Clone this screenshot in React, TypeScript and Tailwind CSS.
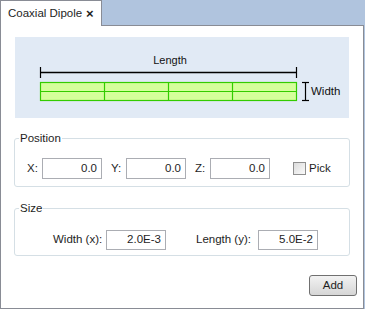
const font = { fontFamily: '"Liberation Sans", Arial, sans-serif' };

function NumField({ value, h = "h-[21px]" }: { value: string; h?: string }) {
  return (
    <div className={`w-[60px] ${h} border border-[#abadb3] bg-white flex items-center justify-end pr-[4px] text-[11.5px] text-[#1e1e1e] whitespace-nowrap`}>
      {value}
    </div>
  );
}

function Group({ title, children, className }: { title: string; children: React.ReactNode; className?: string }) {
  return (
    <fieldset className={`border border-[#d5dfe5] rounded-[3px] mx-[13px] ${className ?? ""}`}>
      <legend className="ml-[4px] px-[1px] text-[11.5px] leading-[14px] text-[#1e1e1e] whitespace-nowrap">{title}</legend>
      {children}
    </fieldset>
  );
}

function DipoleDiagram() {
  return (
    <div className="mx-[14px] mt-[11px] h-[81px] bg-[#e1eaf5]">
      <svg width="340" height="81" viewBox="0 0 340 81">
        <text x="155" y="27" textAnchor="middle" fontSize="11" fill="#111" style={font}>
          Length
        </text>
        <line x1="25" y1="35.5" x2="281" y2="35.5" stroke="#000" strokeWidth="1.5" />
        <line x1="25.5" y1="30" x2="25.5" y2="41" stroke="#000" strokeWidth="1.2" />
        <line x1="281.5" y1="30" x2="281.5" y2="41" stroke="#000" strokeWidth="1.2" />
        <rect x="25.5" y="45.5" width="256" height="18" fill="#d5ff9b" stroke="#33cc00" strokeWidth="1.2" />
        <line x1="25.5" y1="54.5" x2="281.5" y2="54.5" stroke="#33cc00" strokeWidth="1.2" />
        <line x1="89.5" y1="45.5" x2="89.5" y2="63.5" stroke="#33cc00" strokeWidth="1.2" />
        <line x1="153.5" y1="45.5" x2="153.5" y2="63.5" stroke="#33cc00" strokeWidth="1.2" />
        <line x1="217.5" y1="45.5" x2="217.5" y2="63.5" stroke="#33cc00" strokeWidth="1.2" />
        <line x1="290.5" y1="45" x2="290.5" y2="64" stroke="#000" strokeWidth="1.2" />
        <line x1="287" y1="45.5" x2="294" y2="45.5" stroke="#000" strokeWidth="1.2" />
        <line x1="287" y1="63.5" x2="294" y2="63.5" stroke="#000" strokeWidth="1.2" />
        <text x="296" y="58" fontSize="11.5" fill="#111" style={font}>
          Width
        </text>
      </svg>
    </div>
  );
}

export default function App() {
  return (
    <div className="w-[365px] h-[309px] bg-[#b0c4de] flex flex-col" style={font}>
      <div className="relative z-10 -mb-px w-[102px] h-[26px] bg-white border-l border-t border-r border-[#898c95] flex items-center pl-[7px] text-[11.5px] text-[#1e1e1e] whitespace-nowrap">
        <span className="w-[78px]">Coaxial Dipole</span>
        <span className="text-[13px] font-bold leading-none">×</span>
      </div>
      <div className="flex-1 w-[364px] bg-white border border-[#898c95] flex flex-col">
        <DipoleDiagram />

        <Group title="Position" className="mt-[13px] h-[56px]">
          <div className="flex items-center pl-[12px] pt-[13px] text-[11.5px] text-[#1e1e1e] whitespace-nowrap">
            <span className="w-[15px]">X:</span>
            <NumField value="0.0" />
            <span className="ml-[9px] w-[15px]">Y:</span>
            <NumField value="0.0" />
            <span className="ml-[9px] w-[15px]">Z:</span>
            <NumField value="0.0" />
            <span className="ml-[23px] w-[13px] h-[13px] border border-[#8f8f8f] bg-gradient-to-br from-[#dcdcdc] to-[#fafafa]" />
            <span className="ml-[3px]">Pick</span>
          </div>
        </Group>

        <Group title="Size" className="mt-[14px] h-[55px]">
          <div className="flex items-center pl-[38px] pt-[15px] text-[11.5px] text-[#1e1e1e] whitespace-nowrap">
            <span className="w-[53px]">Width (x):</span>
            <NumField value="2.0E-3" h="h-[20px]" />
            <span className="ml-[30px] w-[62px]">Length (y):</span>
            <NumField value="5.0E-2" h="h-[20px]" />
          </div>
        </Group>

        <div className="flex justify-end pr-[6px] mt-[19px]">
          <button className="w-[48px] h-[21px] rounded-[3px] border border-[#707070] bg-gradient-to-b from-[#f2f2f2] to-[#d6d6d6] text-[11.5px] text-[#1e1e1e]">
            Add
          </button>
        </div>
      </div>
    </div>
  );
}
